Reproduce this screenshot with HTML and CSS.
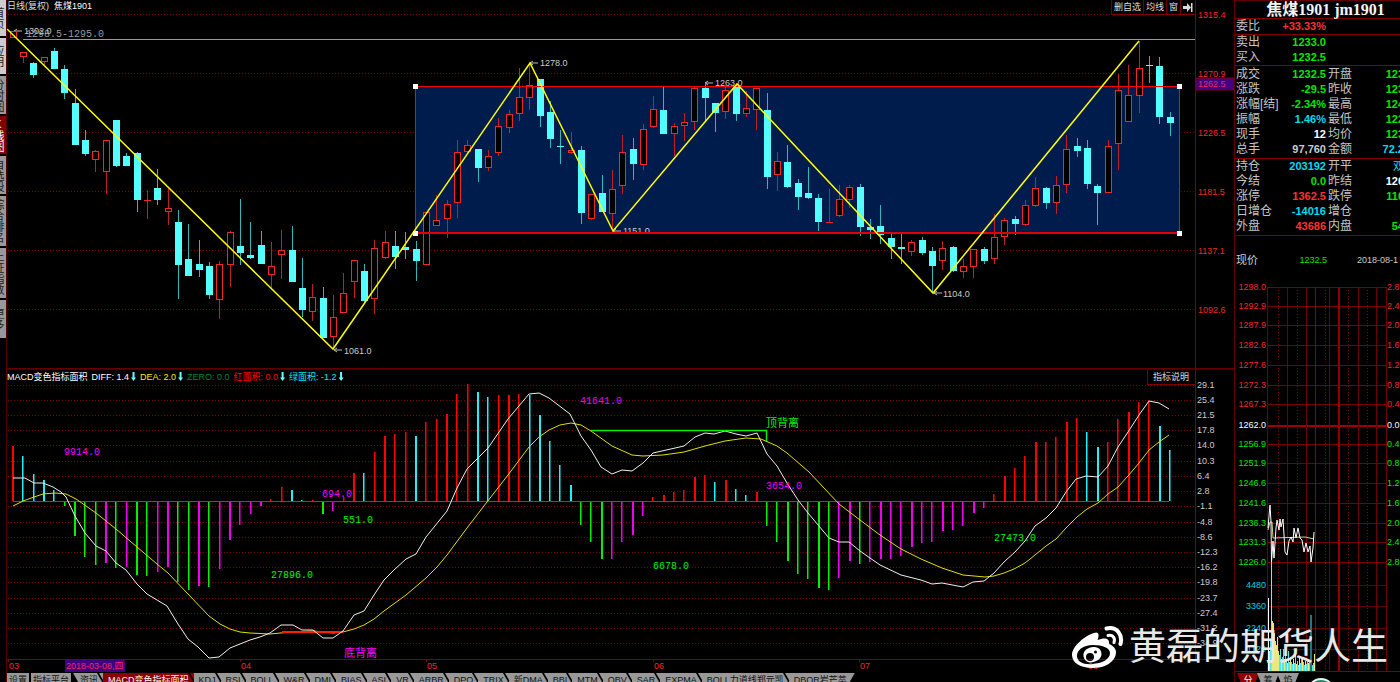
FILE: index.html
```html
<!DOCTYPE html>
<html lang="zh-CN">
<head>
<meta charset="utf-8">
<title>焦煤1901 日线</title>
<link rel="stylesheet" href="styles.css">
</head>
<body>
<div class="app">
  <nav class="side">
    <button class="side-tab light h36">首页</button>
    <button class="side-tab light h36">应用</button>
    <button class="side-tab h38">分时图</button>
    <button class="side-tab active h38">K线图</button>
    <button class="side-tab h38">自选股</button>
    <button class="side-tab h50">综合排名</button>
    <button class="side-tab h50">上证指数</button>
    <button class="side-tab h38">更多</button>
  </nav>

  <main class="main">
    <section class="pane">
      <svg id="price" class="chart" viewBox="7 0 1227 369"></svg>
      <h1 class="caption">日线(复权)&nbsp; <b>焦煤1901</b></h1>
      <div class="tools">
        <button>删自选</button><button>均线</button><button>窗</button><button aria-label="右移"><svg viewBox="0 0 10 9" width="10" height="9"><path d="M0 3H4V0L8 4.500L4 9V6H0ZM8 0H9.500V9H8Z" fill="#ddd"/></svg></button>
      </div>
    </section>
    <section class="pane">
      <svg id="macd" class="chart" viewBox="7 369 1227 304"></svg>
      <div class="legend">
        <span class="white">MACD变色指标面积</span>
        <span class="white">DIFF: 1.4<i></i></span>
        <span class="yellow">DEA: 2.0<i></i></span>
        <span class="green">ZERO: 0.0</span>
        <span class="red">红面积: 0.0<i></i></span>
        <span class="cyan">绿面积: -1.2<i></i></span>
      </div>
      <div class="tools explain"><button>指标说明</button></div>
    </section>
    <nav class="tabs" id="tabs"></nav>
  </main>

  <aside class="quote">
    <h2>焦煤1901 jm1901</h2>
    <dl class="block"><dt>委比</dt><dd class="r">+33.33%</dd></dl>
    <dl class="block"><dt>卖出</dt><dd class="g">1233.0</dd><dt></dt><dd></dd>
      <dt>买入</dt><dd class="g">1232.5</dd></dl>
    <dl class="block padded">
      <dt>成交</dt><dd class="g">1232.5</dd><dt>开盘</dt><dd class="g">123</dd>
      <dt>涨跌</dt><dd class="g">-29.5</dd><dt>昨收</dt><dd class="g">123</dd>
      <dt>涨幅[结]</dt><dd class="g">-2.34%</dd><dt>最高</dt><dd class="g">124</dd>
      <dt>振幅</dt><dd class="c">1.46%</dd><dt>最低</dt><dd class="g">122</dd>
      <dt>现手</dt><dd class="w">12</dd><dt>均价</dt><dd class="g">123</dd>
      <dt>总手</dt><dd>97,760</dd><dt>金额</dt><dd class="c">72.2</dd></dl>
    <dl class="block last">
      <dt>持仓</dt><dd class="c">203192</dd><dt>开平</dt><dd class="c thin">双</dd>
      <dt>今结</dt><dd class="g">0.0</dd><dt>昨结</dt><dd class="w">120</dd>
      <dt>涨停</dt><dd class="r">1362.5</dd><dt>跌停</dt><dd class="g">110</dd>
      <dt>日增仓</dt><dd class="c">-14016</dd><dt>增仓</dt><dd></dd>
      <dt>外盘</dt><dd class="r">43686</dd><dt>内盘</dt><dd class="g">54</dd></dl>
    <div class="now"><span>现价</span><span class="g">1232.5</span><time>2018-08-1</time></div>
    <svg id="mini" class="chart" viewBox="1235 279 165 394"></svg>
    <nav class="mini-tabs"><button class="on">分</button><button>筹</button><button>焰</button></nav>
    <svg class="orb" viewBox="0 0 28 28"><circle cx="14" cy="14" r="13" fill="#1d8a68" stroke="#e8f2ee" stroke-width="2"/></svg>
  </aside>

  <div class="mark">
    <svg viewBox="0 0 52 44" class="weibo">
      <path fill="#fff" fill-rule="evenodd" d="M22 7C26 5 28 8 25.500 14C31 12 38 11 37 18C42 20 46 24 43 31C39 39 30 42 20 42C9 42 0 37 0 29C0 20 14 9 22 7ZM21 19C11 19 5 24 5 30C5 36 12 39 21 38C31 37 38 33 38 27C38 22 31 19 21 19Z"/>
      <path fill="#fff" fill-rule="evenodd" d="M21 21C13 22 10 27 12 32C14 37 20 38 26 34C31 31 30 25 27 22.500C25 21 23 21 21 21ZM18 27A4 4 0 1 0 18 35A4 4 0 1 0 18 27ZM23.500 24.500A1.500 1.500 0 1 0 23.500 27.500A1.500 1.500 0 1 0 23.500 24.500Z"/>
      <path d="M34.500 2.500C45 0 51 9 48.500 18" fill="none" stroke="#fff" stroke-width="4" stroke-linecap="round"/>
      <path d="M36 9.500C41 8.500 43.500 12 42 16.500" fill="none" stroke="#fff" stroke-width="3" stroke-linecap="round"/>
    </svg>
    <span>黄磊的期货人生</span>
  </div>
</div>
<script src="charts.js"></script>
</body>
</html>
```
FILE: styles.css
```css
* { box-sizing: border-box; }
body {
  margin: 0;
  height: 100vh;
  overflow: hidden;
  background: #000;
  color: #ccc;
  font-family: "Liberation Sans", "Noto Sans CJK SC", sans-serif;
  font-size: 9px;
}
button {
  margin: 0;
  padding: 0;
  border: 0;
  background: none;
  color: inherit;
  font: inherit;
  cursor: pointer;
}
.app {
  display: grid;
  grid-template-columns: 7px minmax(0, 1fr) 166px;
  position: relative;
  height: 100%;
}

.side {
  display: flex;
  flex-direction: column;
  gap: 2px;
  overflow: hidden;
  background: #000;
  border-right: 1px solid #500;
}
.side-tab {
  display: flex;
  align-items: flex-end;
  justify-content: center;
  width: 6px;
  padding-right: 2px;
  overflow: hidden;
  background: #999;
  color: #222;
  font-size: 11px;
  line-height: 12px;
  writing-mode: vertical-lr;
  text-orientation: upright;
}
.side-tab.light { background: #ccc; }
.side-tab.active { background: #800000; color: #fff; }
.h36 { height: 36px; }
.h38 { height: 38px; }
.h50 { height: 50px; }

.main { min-width: 0; }
.pane { position: relative; }
.chart { display: block; width: 100%; height: auto; }
.caption {
  position: absolute;
  top: 0;
  left: 0;
  margin: 0;
  font-size: 9px;
  line-height: 13px;
  font-weight: 400;
  color: #ddd;
}
.caption b { font-weight: 400; color: #fff; }
.tools {
  position: absolute;
  top: 0;
  right: 39px;
  display: flex;
  border-bottom: 1px solid #800000;
}
.tools button {
  height: 14px;
  padding: 0 2px;
  border-left: 1px solid #700000;
  background: #000;
  line-height: 15px;
  color: #ddd;
}
.tools svg { display: block; }
.tools.explain { top: 1px; }
.explain button { height: 14px; padding: 0 6px 0 5px; }
.legend {
  position: absolute;
  top: 1px;
  left: 0;
  display: flex;
  gap: 4px;
  line-height: 14px;
  white-space: nowrap;
}
.legend span { display: flex; gap: 2px; }
.legend i {
  width: 5px;
  height: 9px;
  margin-top: 2px;
  background: #66ffff;
  clip-path: polygon(30% 0, 70% 0, 70% 60%, 100% 60%, 50% 100%, 0 60%, 30% 60%);
}
.white { color: #fff; }
.yellow { color: #f0f000; }
.green { color: #008040; }
.red { color: #ff0000; }
.cyan { color: #00e8f8; }

.tabs { display: flex; overflow: hidden; height: 14px; }
.tabs button {
  position: relative;
  flex: none;
  height: 14px;
  padding: 0 5px;
  background: #999;
  color: #111;
  line-height: 12px;
}
.tabs button::after {
  content: "";
  position: absolute;
  top: 0;
  right: 0;
  width: 2px;
  height: 14px;
  background: #000;
  transform: skewX(30deg);
}
.tabs button.boxed { padding: 0 2px; margin-right: 2px; }
.tabs button.boxed::after { display: none; }
.tabs button.first { padding-left: 7px; clip-path: polygon(0 0, 100% 0, 100% 100%, 8px 100%); }
.tabs button.on { background: #8b0000; color: #fff; }
.tabs button.end { padding-right: 8px; clip-path: polygon(0 0, 100% 0, calc(100% - 8px) 100%, 0 100%); }
.tabs button.end::after { display: none; }

.quote {
  position: relative;
  overflow: hidden;
  border-left: 1px solid #600000;
  border-top: 1px solid #600000;
}
.quote h2 {
  margin: 0;
  padding-left: 16px;
  text-align: center;
  font: bold 16px/17px "Liberation Serif", "Noto Sans CJK SC", serif;
  color: #f4f4f4;
}
.block {
  display: grid;
  grid-template-columns: 44px 47px 34px 44px;
  margin: 0;
  border-top: 1px solid #800000;
  line-height: 15px;
  white-space: nowrap;
}
.block dt { padding-left: 1px; font-size: 12px; color: #c4c4c4; height: 15px; }
.block dd { margin: 0; font-size: 11px; font-weight: 700; text-align: right; height: 15px; }
.block dt:nth-of-type(even) { padding-left: 2px; }
.padded { padding: 1px 0; }
.last { padding-bottom: 1px; border-bottom: 1px solid #800000; }
.r { color: #ff3030; }
.g { color: #00e800; }
.c { color: #00dcf0; }
.w { color: #fff; }
.block .thin { font-weight: 400; }
.now {
  display: grid;
  grid-template-columns: 44px 47px 1fr;
  padding: 17px 0 11px 1px;
  line-height: 15px;
}
.now span:first-child { font-size: 11px; }
.now .g { text-align: right; }
.now time { padding-left: 30px; }
.mini-tabs { display: flex; padding-left: 2px; }
.mini-tabs button {
  width: 22px;
  height: 14px;
  margin-right: -2px;
  background: #999;
  color: #111;
  line-height: 12px;
  clip-path: polygon(0 0, 100% 0, 75% 100%, 25% 100%);
}
.mini-tabs .on { background: #900000; color: #fff; }
.orb { position: absolute; left: 72px; top: 677px; width: 28px; height: 28px; }

.mark {
  position: absolute;
  right: 12px;
  bottom: 8px;
  display: flex;
  align-items: center;
  gap: 5px;
  color: #e8e8e8;
  font-size: 37px;
  line-height: 52px;
  font-weight: 400;
  white-space: nowrap;
  pointer-events: none;
}
.weibo { width: 52px; height: 44px; }

svg text { font-family: "Liberation Sans", "Noto Sans CJK SC", sans-serif; font-size: 9px; }
svg .mono { font-family: "Liberation Mono", monospace; font-size: 10px; }
svg .big { font-size: 11px; }
.crisp { shape-rendering: crispEdges; }
.dots { stroke: #780000; stroke-dasharray: 1 2; }
```
FILE: charts.js
```js
const NS = 'http://www.w3.org/2000/svg';
function add(parent, tag, attrs, text) {
  const el = document.createElementNS(NS, tag);
  for (const k in attrs) el.setAttribute(k, attrs[k]);
  if (text !== undefined) el.textContent = text;
  parent.appendChild(el);
  return el;
}
const line = (p, x1, y1, x2, y2, stroke, w = 1, extra = {}) =>
  add(p, 'line', { x1, y1, x2, y2, stroke, 'stroke-width': w, class: 'crisp', ...extra });
const label = (p, x, y, t, fill, cls = '', anchor = 'start') =>
  add(p, 'text', { x, y, fill, class: cls, 'text-anchor': anchor }, t);
const dots = (p, x1, y1, x2, y2) => add(p, 'line', { x1, y1, x2, y2, class: 'crisp dots' });
const barX = i => 12.7 + i * 10.33;

/* Candles: direction, body top, body bottom, wick top, wick bottom */
const candles = `R31,38,31,38 R52,57,52,63 C63,75,62,78 R57,62,57,66 C51,69,48,69 C69,93,65,99 C103,145,89,145 C140,154,130,156
R151,160,150,172 R140,172,140,194 C120,166,120,167 C156,166,153,166 C153,200,152,212 R200,201,190,219 C188,200,169,205 R208,212,189,225
C222,265,210,299 C259,276,224,276 C264,270,240,277 C266,295,262,299 R264,300,261,319 R232,265,231,287 C246,253,199,265 C255,258,222,259
C245,264,231,264 R266,275,242,288 R250,255,230,279 C250,282,226,282 C288,310,258,317 R297,312,284,321 C298,338,287,338 R317,337,295,349
R293,313,273,313 R260,282,260,298 C271,301,264,304 R248,299,240,314 R242,258,231,259 C246,257,231,269 C247,250,232,259 C249,261,241,281
R212,265,212,265 R220,226,195,226 R204,219,200,238 R152,203,140,218 R145,152,140,154 C149,168,149,182 R156,168,150,171 R126,153,118,156
R114,128,110,133 R97,114,68,121 R85,98,63,110 C79,116,79,127 C112,139,101,148 C146,147,130,164 R150,153,132,154 C150,213,146,224
R194,219,194,220 C193,212,175,212 R189,214,170,230 R152,186,135,194 C149,164,138,180 R129,165,124,170 R109,127,96,128 C110,134,87,134
R126,134,123,156 R122,126,113,141 R88,122,87,130 C88,98,83,121 C103,113,103,132 R90,112,85,119 C87,114,84,121 R108,114,91,117
R88,110,88,130 C110,177,93,189 R161,175,152,191 C162,187,145,188 C183,197,179,210 C193,198,167,199 C198,222,194,231 R222,223,189,223
R199,216,185,217 R187,200,185,208 C187,227,184,236 C227,230,219,239 C226,235,205,244 C238,247,233,259 C247,249,234,264 R242,252,240,256
C240,253,237,255 C251,266,247,293 R248,261,241,270 C247,271,246,272 R266,272,259,278 R249,267,249,278 C249,261,247,264 R237,259,214,264
R220,237,218,245 C219,224,216,235 R205,225,200,226 R188,206,177,207 C188,203,187,209 R185,203,176,214 R149,185,135,193 C146,151,138,157
C148,184,140,189 C186,193,184,225 R146,193,140,193 R90,144,74,170 R95,122,65,122 R68,96,41,113 C65,66,56,83 C66,117,57,124 C117,123,112,136`
  .split(/\s+/).map(s => [s[0], ...s.slice(1).split(',').map(Number)]);

const price = document.getElementById('price');
[[14, '1315.4'], [73, '1270.9'], [132, '1226.5'], [191, '1181.5'], [250, '1137.1'], [309, '1092.6']].forEach(([y, t]) => {
  dots(price, 8, y + .5, 1195, y + .5);
  label(price, 1198, y + 4, t, '#f02828');
});
line(price, 1195.5, 0, 1195.5, 369, '#800000');
line(price, 7, 368.5, 1234, 368.5, '#600000');
add(price, 'rect', { x: 1196, y: 78, width: 39, height: 12, fill: '#400080', stroke: '#800000' });
label(price, 1198, 87, '1262.5', '#f02868');
line(price, 23, 39.5, 1195, 39.5, '#999');
add(price, 'rect', { x: 416, y: 86, width: 764, height: 147, fill: '#001c4c' });
label(price, 26, 37, '1298.5-1295.0', '#999', 'mono');

const edge = () => {
  line(price, 415.5, 86, 415.5, 233, '#ff0000');
  line(price, 1179.5, 86, 1179.5, 233, '#ff0000');
  line(price, 415, 86.5, 1180, 86.5, '#ff0000');
  line(price, 415, 233, 1180, 233, '#e00000', 2);
};
const marks = [[24, 34, '1302.0', 14, 31], [344, 354, '1061.0', 334, 350], [540, 66, '1278.0', 530, 63],
  [623, 234, '1151.0', 613, 231], [715, 86, '1263.0', 705, 83], [943, 297, '1104.0', 934, 293]];
marks.forEach(([x, y, t, ax, ay]) => {
  label(price, x, y, t, '#ccc');
  add(price, 'path', { d: `M${ax + 8} ${ay}H${ax}m3-2l-3 2l3 2`, stroke: '#bbb', fill: 'none' });
});
candles.forEach(([k, t, b, wt, wb], i) => {
  const x = Math.round(barX(i)), c = k === 'R' ? '#f02828' : '#54ffff';
  const w = k === 'R' ? '#c02020' : '#30b8b8';
  if (wt < t) line(price, x + .5, wt, x + .5, t, w);
  if (wb > b) line(price, x + .5, b, x + .5, wb, w);
  if (k === 'C') add(price, 'rect', { x: x - 3, y: t, width: 7, height: b - t, fill: c, class: 'crisp' });
  else if (b - t < 2) line(price, x - 3, t + .5, x + 4, t + .5, c);
  else add(price, 'rect', { x: x - 2.5, y: t + .5, width: 6, height: b - t - 1, fill: '#000', stroke: c, class: 'crisp' });
});
edge();
add(price, 'polyline', { points: '7,29 333,349 530,63 613,231 737,84 933,293 1139,41', fill: 'none', stroke: '#ffff00', 'stroke-width': 1.5 });
[[415, 86], [1179, 86], [415, 233], [1179, 233]].forEach(([x, y]) =>
  add(price, 'rect', { x: x - 2, y: y - 2, width: 5, height: 5, fill: '#fff', class: 'crisp' }));

/* Histogram: colour key and the y position of each bar's end */
const bars = `R446 C456 C474 C480 C490 G506 G536 G557 G565 M563 G568 M567 G575 G576 M572 M567 G582 G590 M586 G587 M569 M540 M525 M514 M506
R499 R487 C490 C500 R500 G514 M511 R497 R473 C473 R452 R436 R434 R432 C436 R422 R419 R414 R394 R384 C392 C397 R395 R395 R394 C395 C415
C441 C465 C485 G525 G542 G559 M559 M542 M535 M516 R497 R495 R492 R490 R477 R475 C482 R480 C489 C495 R492 G526 G542 G561 G574 G579 G588
G590 M578 M561 G564 M562 M559 M559 M556 M547 M543 M542 M531 M530 M526 M513 M508 R494 R476 R468 R456 R442 R442 R437 R422 R418 C432 C447
R442 R419 R412 R402 R400 C426 C450`.split(/\s+/);
const barColor = { R: '#ff0000', C: '#20f0f8', G: '#00f000', M: '#f000f0' };
const macd = document.getElementById('macd');
['29.1', '25.4', '21.5', '17.8', '14.0', '10.3', '6.4', '2.8', '-1.1', '-4.8', '-8.6', '-12.3', '-16.2', '-19.8', '-23.7', '-27.4', '-31.2', '-34.9']
  .forEach((t, i) => {
    const y = Math.round(384.5 + i * 15.23);
    dots(macd, 8, y + .5, 1195, y + .5);
    label(macd, 1197, y + 3, t, '#ccc');
  });
line(macd, 7, 369.5, 1234, 369.5, '#400000');
line(macd, 1195.5, 369, 1195.5, 660, '#800000');
line(macd, 7, 659.5, 1234, 659.5, '#800000');
bars.forEach((b, i) => {
  const y = +b.slice(1), x = Math.round(barX(i) - .7);
  add(macd, 'rect', { x, y: Math.min(y, 501), width: i % 3 ? 1.5 : 2, height: Math.abs(y - 501), fill: barColor[b[0]] });
});
line(macd, 13, 501.5, 1169, 501.5, '#008050');
const curve = (pts, stroke) => add(macd, 'polyline', { points: pts, fill: 'none', stroke, 'stroke-width': 1 });
curve('13,506 23,501 34,497 43,494 55,493 66,494 76,499 96,513 116,529 137,547 157,564 168,573 188,594 209,616 220,624 230,629 240,632 250,633 270,634 291,632 313,631 333,633 343,632 354,629 364,625 374,619 384,611 406,595 426,578 437,567 447,555 467,528 487,502 508,475 529,447 539,437 549,430 560,425 571,423 581,425 591,431 612,446 632,455 643,456 663,455 684,452 705,446 725,441 746,438 761,439 777,446 787,453 809,472 839,504 860,520 880,535 901,549 921,559 942,568 963,575 985,577 994,576 1004,573 1014,569 1025,563 1035,555 1046,546 1056,539 1066,528 1077,517 1087,509 1098,503 1108,494 1118,487 1128,476 1139,463 1149,450 1159,442 1169,435', '#e0e000');
line(macd, 282, 632, 343, 632, '#ff2000', 2);
curve('13,478 25,478 34,483 43,483 53,487 61,492 66,497 75,516 85,533 96,546 106,551 116,563 126,570 137,584 147,594 157,600 167,606 178,624 188,639 198,647 209,658 219,657 230,648 240,644 250,640 260,637 270,633 281,625 293,625 302,630 313,630 323,638 333,638 343,631 354,615 364,611 374,595 384,580 394,570 406,559 416,554 426,537 447,511 457,488 467,469 488,448 508,419 529,394 539,393 549,398 570,414 581,436 591,450 601,467 612,474 622,470 632,471 643,463 653,453 684,446 695,437 705,433 714,434 725,431 736,434 746,436 757,433 767,454 777,466 787,483 798,500 808,513 829,538 839,542 849,542 860,551 880,565 901,575 921,580 932,584 942,583 963,587 973,582 984,581 994,573 1004,562 1015,552 1025,541 1035,526 1046,518 1056,508 1066,492 1076,479 1086,476 1098,477 1108,466 1118,447 1128,432 1139,415 1149,401 1159,403 1169,409', '#f0f0f0');
add(macd, 'path', { d: 'M591 430.500H766.500V441', fill: 'none', stroke: '#00f000', 'stroke-width': 1.5 });
[[64, 455, '9914.0', 'M'], [322, 497, '694.0', 'M'], [343, 523, '551.0', 'G'], [271, 578, '27896.0', 'G'], [580, 404, '41641.0', 'M'],
  [653, 569, '6678.0', 'G'], [766, 489, '3654.0', 'M'], [994, 541, '27473.0', 'G']]
  .forEach(([x, y, t, k]) => label(macd, x, y, t, barColor[k], 'mono'));
label(macd, 766, 427, '顶背离', '#00f000', 'big');
label(macd, 344, 657, '底背离', '#ff00ff', 'big');
add(macd, 'rect', { x: 65, y: 660, width: 60, height: 12, fill: '#400080' });
label(macd, 66, 669, '2018-03-08,四', '#f02868');
[[9, '03'], [241, '04'], [427, '05'], [654, '06'], [860, '07'], [1088, '08']].forEach(([x, t]) => {
  line(macd, x - .5, 659, x - .5, 662, '#800000');
  label(macd, x, 669, t, '#f02828');
});

/* Intraday chart */
const mini = document.getElementById('mini');
const levels = [287, 306, 325, 345, 365, 385, 404, 425, 444, 463, 483, 503, 523, 542, 562];
const prices = ['1298.0', '1292.9', '1287.9', '1282.6', '1277.6', '1272.3', '1267.3', '1262.0', '1256.9', '1251.9', '1246.6', '1241.6', '1236.3', '1231.3', '1226.0'];
const pct = ['2.8', '2.4', '2.0', '1.6', '1.2', '0.8', '0.4', '0.0', '0.4', '0.8', '1.2', '1.6', '2.0', '2.4', '2.8'];
levels.forEach((y, i) => {
  const c = i < 7 ? '#f02828' : i > 7 ? '#00e800' : '#fff';
  line(mini, 1268, y + .5, 1387, y + .5, i === 7 ? '#a00000' : '#780000', i === 7 ? 2 : 1);
  label(mini, 1266, y + 3, prices[i], c, '', 'end');
  label(mini, 1387, y + 3, pct[i], c);
});
[[585, '4480'], [606, '3360'], [628, '2240'], [649, '1120']].forEach(([y, t]) => {
  line(mini, 1268, y + .5, 1387, y + .5, '#600000');
  label(mini, 1266, y + 3, t, '#00d0e8', '', 'end');
});
[1267, 1287, 1306, 1315, 1329, 1338, 1358, 1376, 1386].forEach(x =>
  line(mini, x + .5, 287, x + .5, 672, x === 1315 || x === 1338 ? '#900000' : '#700000', x === 1338 ? 2 : 1));
[1278, 1297, 1325, 1348, 1367].forEach(x => dots(mini, x + .5, 287, x + .5, 672));
const heights = [34, 20, 30, 109, 50, 48, 38, 30, 26, 34, 20, 16, 22, 12, 14, 22, 12, 17, 10, 8, 20, 9, 14, 9, 7, 12, 8, 16, 7, 10, 6, 13, 8, 12, 14, 9, 6, 10, 7, 12, 8, 11, 7, 14, 6, 8, 17];
heights.forEach((h, i) => add(mini, 'rect', { x: 1268 + i, y: 671 - h, width: 1, height: h, fill: i % 3 === 1 || (i > 3 && i < 10) ? '#ece880' : '#50e8f0' }));
line(mini, 1268.5, 598, 1268.5, 671, '#fff');
line(mini, 1271.5, 563, 1271.5, 671, '#50ffff');
line(mini, 1311, 615, 1311, 671, '#207878', 2);
add(mini, 'polyline', { points: '1268,530 1270,522 1272,522 1273,538 1305,537 1314,539', fill: 'none', stroke: '#d8d080' });
add(mini, 'polyline', { points: '1268,528 1270,505 1271,522 1271.500,562 1273,541 1274,558 1276,528 1277,520 1279,530 1280,519 1281,527 1283,519 1284,535 1285,552 1287,555 1289,541 1291,537 1293,542 1294,528 1296,538 1298,528 1300,538 1302,540 1304,552 1306,543 1308,552 1310,546 1311,562 1313,548 1314,532', fill: 'none', stroke: '#fff' });
line(mini, 1234, 671.5, 1400, 671.5, '#800000');

const names = ['设置', '指标平台', '资讯', 'MACD变色指标面积', 'KDJ', 'RSI', 'BOLL', 'W&R', 'DMI', 'BIAS', 'ASI', 'VR', 'ARBR', 'DPO', 'TRIX',
  '新DMA', 'BBI', 'MTM', 'OBV', 'SAR', 'EXPMA', 'BOLL力道线郑元凯', 'DBQR岩芒萃'];
const tabs = document.getElementById('tabs');
names.forEach((n, i) => {
  const b = document.createElement('button');
  b.textContent = n;
  b.className = i < 2 ? 'boxed' : i === 2 ? 'first' : i === 3 ? 'on' : i === names.length - 1 ? 'end' : '';
  tabs.appendChild(b);
});
```
